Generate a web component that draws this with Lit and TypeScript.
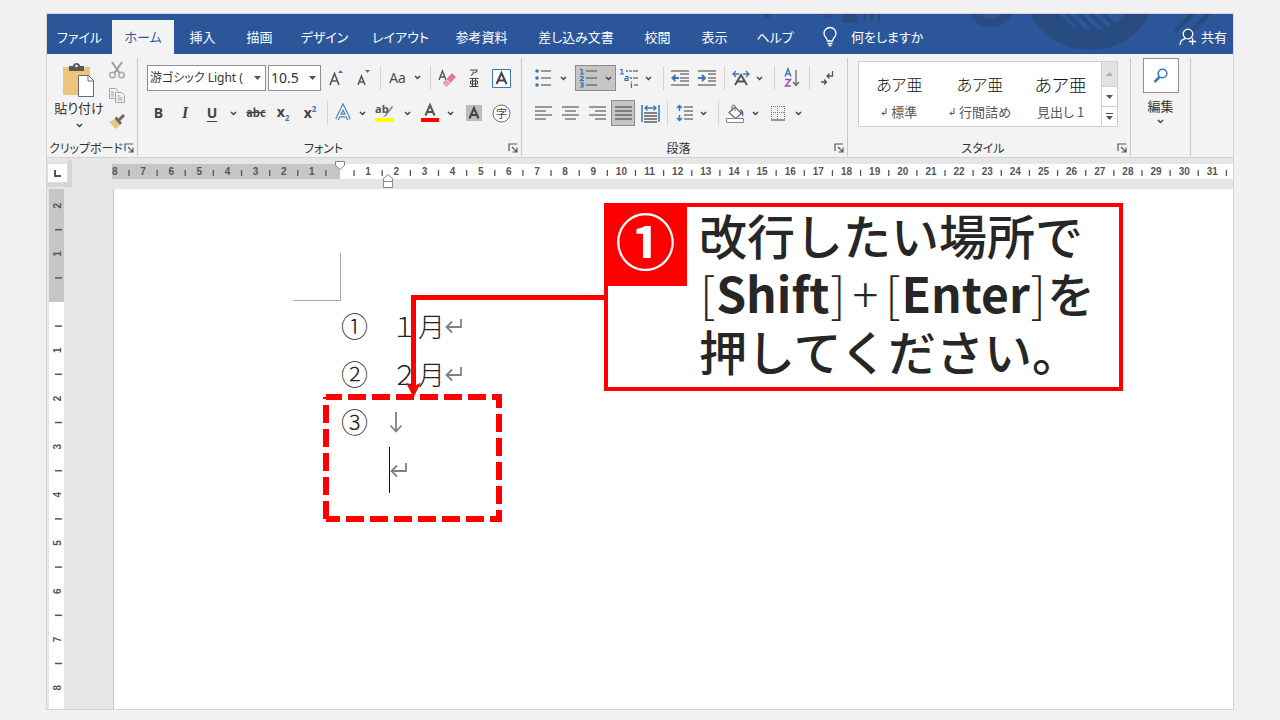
import { LitElement, html, svg, css } from "lit";
import { customElement, property, state } from "lit/decorators.js";
import { classMap } from "lit/directives/class-map.js";

const icon = (w: number, h: number, body: unknown) =>
  html`<svg width=${w} height=${h} viewBox="0 0 ${w} ${h}" fill="none" aria-hidden="true">${body}</svg>`;

const chevron = icon(7, 5, svg`<path d="M1 1l2.500 2.500L6 1" stroke="#444" stroke-width="1.500"/>`);
const caret = icon(7, 4, svg`<path d="M0 0h7L3.500 4z" fill="#555"/>`);
const launcherIcon = icon(10, 10, svg`<path d="M1 8V1h8M4 4l4.500 4.500M9 4.500V9H4.500" stroke="#555" stroke-width="1.200"/>`);

const lines = (rows: number[][], color = "#666") =>
  rows.map(([x1, x2, y]) => svg`<path d="M${x1} ${y}H${x2}" stroke=${color} stroke-width="1.300"/>`);

const icons = {
  paste: icon(34, 36, svg`
    <path d="M1 5h27v28H1z" fill="#edc47c"/>
    <path d="M7 9V4h4c0-4 7-4 7 0h4v5z" fill="#5a5a5a"/><circle cx="14.500" cy="4" r="1.300" fill="#f3f3f3"/>
    <path d="M16.500 13.500h10l5 5v16h-15z" fill="#fff" stroke="#6a6a6a"/><path d="M26 13.500v5.500h5.500" stroke="#6a6a6a"/>`),
  cut: icon(18, 18, svg`
    <path d="M4 1l7.500 11M14 1L6.500 12" stroke="#9b9b9b" stroke-width="2"/>
    <circle cx="4.500" cy="14" r="2.800" stroke="#aaa" stroke-width="1.500"/><circle cx="13.500" cy="14" r="2.800" stroke="#aaa" stroke-width="1.500"/>`),
  copy: icon(18, 17, svg`
    <path d="M1.500 1.500h6l3 3v7h-9z" fill="#f3f3f3" stroke="#a5a5a5"/>
    <path d="M7.500 5.500h6l3 3v7h-9z" fill="#f3f3f3" stroke="#a5a5a5"/>
    <path d="M3 5h3M3 7h3M3 9h3M9.500 9h3M9.500 11h5M9.500 13h5" stroke="#a5a5a5"/>`),
  brush: icon(18, 17, svg`
    <path d="M1 9l6-3 5 6-4 4z" fill="#edc47c"/><path d="M6.500 5.500l5.500 6.500 2-2-5.500-6.500z" fill="#6b6b6b"/>
    <path d="M11 7l5-5" stroke="#6b6b6b" stroke-width="3"/>`),
  grow: icon(16, 18, svg`<path d="M2 16L6.500 4.500 11 16M3.500 12h6" stroke="#555" stroke-width="1.600"/><path d="M10 4l2.500-3L15 4z" fill="#3a78b5"/>`),
  shrink: icon(14, 18, svg`<path d="M1 16l3.500-9L8 16M2.500 13h4" stroke="#555" stroke-width="1.500"/><path d="M8 1h5l-2.500 3z" fill="#3a78b5"/>`),
  eraser: icon(18, 19, svg`
    <path d="M1 11L4.500 2 8 11M2 8h5" stroke="#555" stroke-width="1.400"/>
    <path d="M8.500 10l5.500-6 4 4-5.500 6z" fill="#e8788c"/><path d="M8 10.500l4 4-3.500 3.500-4-4z" fill="#ee9aa8"/>`),
  ruby: icon(14, 20, svg`
    <path d="M3 2h7c0 2-1 2.500-2.500 3M6.500 3.500c0 2-.5 3-2.500 4" stroke="#444" stroke-width="1.200"/>
    <path d="M2.500 10.500h9M2.500 18.500h9M5.500 10.500v8M8.500 10.500v8M3.500 13v3M10.500 13v3M3.500 13h7M3.500 16h7" stroke="#444"/>`),
  boxA: icon(19, 19, svg`<path d="M.5.5h18v18H.5z" fill="#fff" stroke="#3a78b5"/><path d="M4.500 15L9.500 4l5 11M6 11.500h7" stroke="#444" stroke-width="2"/>`),
  glowA: icon(16, 18, svg`<path d="M2 15.500L8 3l6 12.500M4.500 11.500h7" stroke="#4a86c5" stroke-width="4"/><path d="M2 15.500L8 3l6 12.500M4.500 11.500h7" stroke="#fff" stroke-width="1.500"/>`),
  marker: icon(20, 20, svg`
    <text class="glyph" x="0" y="10" font-size="11" font-weight="700" fill="#555">ab</text>
    <path d="M17 3l-7 9-2 2 3-1 7-9z" fill="#777"/><path d="M0 15h19v4H0z" fill="#ff0"/>`),
  fontColor: icon(20, 20, svg`<path d="M5.500 12.500L10 2l4.500 10.500M7 9h6" stroke="#555" stroke-width="2"/><path d="M1 15h18v4H1z" fill="red"/>`),
  shadeA: icon(16, 16, svg`<path d="M0 0h16v16H0z" fill="#bdbdbd"/><path d="M3.500 13.500L8 3l4.500 10.500M5 10h6" stroke="#444" stroke-width="2"/>`),
  encircle: icon(19, 19, svg`<circle cx="9.500" cy="9.500" r="8.500" fill="#fff" stroke="#666"/><text class="jp" x="4" y="13.500" font-size="11" fill="#444">字</text>`),
  bullets: icon(16, 18, svg`${[2, 9, 16].map(y => svg`<circle cx="2" cy=${y} r="1.800" fill="#3a78b5"/>`)}${lines([[6, 16, 2], [6, 16, 9], [6, 16, 16]])}`),
  numbers: icon(17, 20, svg`
    <path d="M0 1.500h2V6M0 6h4M0 8.500h3V10L.5 12.500H4M0 15h3v4H0M1 17h2" stroke="#2f6fb0" stroke-width="1.200"/>
    ${lines([[6, 17, 3], [6, 17, 10], [6, 17, 17]])}`),
  multi: icon(19, 20, svg`
    <path d="M0 1.500h2V6M0 6h4M5 8.500h3v4H5v-2h3M11.500 13.500v1M10.500 16h1v4" stroke="#2f6fb0" stroke-width="1.200"/>
    ${lines([[6, 8, 3], [9, 12, 3], [13, 18, 3], [10, 12, 10], [13, 18, 10], [14, 18, 17]])}`),
  outdent: icon(18, 16, svg`${lines([[0, 18, 1], [9, 18, 4], [9, 18, 8], [9, 18, 11], [0, 18, 15]])}<path d="M8 8H2M4.500 5L1.500 8l3 3" stroke="#3a78b5" stroke-width="2"/>`),
  indent: icon(18, 16, svg`${lines([[0, 18, 1], [10, 18, 4], [10, 18, 8], [10, 18, 11], [0, 18, 15]])}<path d="M0 8h6M4 5l3 3-3 3" stroke="#3a78b5" stroke-width="2"/>`),
  scaleA: icon(18, 18, svg`
    <path d="M7 5H1M4 2L1 5l3 3M11 5h6M14 2l3 3-3 3" stroke="#3a78b5" stroke-width="1.300"/>
    <path d="M3 16l6-10 6 10M5 12.500h8" stroke="#555" stroke-width="2"/>`),
  sort: icon(16, 20, svg`
    <path d="M1 8.500L4 1l3 7.500M2 6h4" stroke="#3a78b5" stroke-width="1.400"/><path d="M1 11.500h5.500L1.500 18H7" stroke="#9a4fb5" stroke-width="1.500"/>
    <path d="M12 2v15M9 14l3 3.500 3-3.500" stroke="#666" stroke-width="1.300"/>`),
  marks: icon(13, 16, svg`<path d="M11.500 1v5H6M8.500 3.500L6 6l2.500 2.500" stroke="#555" stroke-width="1.300"/><path d="M0 12h5M3 9.500L5.500 12 3 14.500" stroke="#555" stroke-width="1.300"/>`),
  left: icon(17, 14, lines([[0, 17, 1], [0, 11, 5], [0, 17, 9], [0, 11, 13]])),
  center: icon(17, 14, lines([[0, 17, 1], [3, 14, 5], [0, 17, 9], [3, 14, 13]])),
  right: icon(17, 14, lines([[0, 17, 1], [6, 17, 5], [0, 17, 9], [6, 17, 13]])),
  justify: icon(17, 14, lines([[0, 17, 1], [0, 17, 5], [0, 17, 9], [0, 17, 13]], "#555")),
  distribute: icon(19, 19, svg`
    <path d="M1 1v17M18 1v17" stroke="#3a78b5" stroke-width="1.500"/><path d="M4 4h11M6.500 1.500L4 4l2.500 2.500M12.500 1.500L15 4l-2.500 2.500" stroke="#3a78b5" stroke-width="1.300"/>
    ${lines([[3, 16, 9], [3, 16, 12], [3, 16, 15], [3, 16, 18]], "#444")}`),
  spacing: icon(17, 18, svg`<path d="M3.500 1v6M1 4l2.500-2.500L6 4M3.500 11v6M1 14l2.500 2.500L6 14" stroke="#3a78b5" stroke-width="1.500"/>${lines([[8, 17, 3], [8, 17, 7], [8, 17, 11], [8, 17, 15]])}`),
  bucket: icon(19, 19, svg`
    <path d="M9 3l6.500 6.500-6 5L3 8.500z" fill="#fff" stroke="#666" stroke-width="1.200"/><path d="M6 7V2.500c0-2 3-2 3 0V7" stroke="#666"/>
    <path d="M14 5c4 1 4 5 2.500 8z" fill="#3a78b5"/><path d="M.5 14.500h17v4H.5z" fill="#fff" stroke="#888"/>`),
  borders: icon(16, 16, svg`<path d="M1.500 1v13M7.500 1v13M14.500 1v13M1 1.500h14M1 7.500h14" stroke="#777" stroke-dasharray="1 1"/><path d="M1 15h14" stroke="#777" stroke-width="1.500"/>`),
  search: icon(16, 16, svg`<circle cx="9.500" cy="5.500" r="4.300" stroke="#3a78b5" stroke-width="1.600"/><path d="M6.500 9L1.500 14" stroke="#3a78b5" stroke-width="2.500"/>`),
  bulb: icon(14, 20, svg`<path d="M4.500 14c0-3-3.500-4-3.500-7.500a6 6 0 0 1 12 0c0 3.500-3.500 4.500-3.500 7.500zM4.500 16.500h5M5.500 18.500h3" stroke="#fff" stroke-width="1.300"/>`),
  person: icon(18, 18, svg`<circle cx="9" cy="6" r="4.800" stroke="#fff" stroke-width="1.300"/><path d="M1 17c0-4 3-6 5.500-6.500M10 13.500h7M13.500 10v7" stroke="#fff" stroke-width="1.300"/>`),
  enter: icon(17, 16, svg`<path d="M16 1v8H2M7 3.500L1.500 9 7 14.500" stroke="#808080" stroke-width="1.800"/>`),
  lineBreak: icon(14, 22, svg`<path d="M7 1v19M1.500 14.500L7 20.500l5.500-6" stroke="#808080" stroke-width="1.800"/>`),
};

const base = css`
  *, *::before, *::after { box-sizing: border-box; }
  svg { display: block; flex: none; overflow: visible; }
  button, select { font: inherit; color: inherit; margin: 0; padding: 0; border: 0; background: none; border-radius: 0; }
  .glyph { font-family: "Open Sans", sans-serif; }
  .jp { font-family: "Noto Sans CJK JP", sans-serif; }
`;

@customElement("ribbon-tabs")
export class RibbonTabs extends LitElement {
  static styles = [base, css`
    :host { display: block; }
    .bar { position: relative; display: flex; align-items: flex-end; height: 40px; background: #2b579a; color: #fff; overflow: hidden; }
    .art { position: absolute; right: 0; top: 0; }
    .tabs { position: relative; display: grid; grid-template-columns: 65px 62px 57px 57px 73px 79px 83px 106px 57px 57px 64px; padding-right: 1px; }
    .tab { height: 34px; white-space: nowrap; display: flex; justify-content: center; align-items: center; }
    .active { background: #f3f3f3; color: #2b579a; }
    .tell, .share { position: relative; display: flex; align-items: center; height: 34px; }
    .tell { gap: 14px; padding-left: 15px; }
    .share { gap: 4px; margin-left: auto; padding-right: 6px; }
  `];
  @state() private active = "ホーム";
  private names = ["ファイル", "ホーム", "挿入", "描画", "デザイン", "レイアウト", "参考資料", "差し込み文書", "校閲", "表示", "ヘルプ"];

  render() {
    return html`<nav class="bar">
      <svg class="art" width="480" height="40" viewBox="0 0 480 40" fill="none" stroke="#284b80" aria-hidden="true">
        <path d="M12 0h5v4h-5zM67 0h11v5zM89 0h15v9H89z" fill="#284b80" stroke="none"/>
        <path d="M112 0v7M119 0v7M126 0v7" stroke-width="3"/>
        <circle cx="238" cy="-9" r="18" stroke-width="9"/>
        <circle cx="337" cy="-32" r="58" stroke-width="20"/>
        <path d="M303 0l25 24M314 0l22 23M326 0l20 20M338 0l17 17M350 0l14 14" stroke-width="4"/>
        <path d="M422 17L440 0M444 11L456 0M430 25L451 5" stroke-width="5"/>
      </svg>
      <div class="tabs" role="tablist">
        ${this.names.map(n => html`<button role="tab" class=${classMap({ tab: true, active: n === this.active })}
          aria-selected=${n === this.active} @click=${() => (this.active = n)}>${n}</button>`)}
      </div>
      <button class="tell">${icons.bulb}<span>何をしますか</span></button>
      <button class="share">${icons.person}<span>共有</span></button>
    </nav>`;
  }
}

@customElement("ribbon-panel")
export class RibbonPanel extends LitElement {
  static styles = [base, css`
    :host { display: block; }
    .ribbon { display: grid; grid-template-columns: 91px 384px 326px 283px 60px 1fr; padding: 4px 0 1px; background: #f3f3f3; border-bottom: 1px solid #d2d2d2; color: #333; }
    .group { display: flex; flex-direction: column; border-right: 1px solid #c8c8c8; }
    .body { height: 82px; }
    .caption { display: grid; grid-template-columns: 1fr auto; align-items: center; height: 16px; padding: 0 3px 0 1px; text-align: center; font-size: 12px; line-height: 16px; white-space: nowrap; }
    .rows { display: flex; flex-direction: column; gap: 9px; padding-top: 7px; }
    .font { padding-left: 9px; }
    .para { padding-left: 11px; }
    .row { display: grid; height: 26px; place-items: center; }
    .font1 { grid-template-columns: 121px 54px 28px 28px 4px 46px 4px 30px 23px 32px; justify-content: start; }
    .font2 { grid-template-columns: 23px 30px 24px 19px 26px 28px 26px 8px 24px 14px 31px 15px 29px 13px 34px 20px; justify-content: start; }
    .para1 { grid-template-columns: 20px 20px 45px 23px 14px 16px 18px 35px 1px 31px 7px 22px 14px 20px 16px; justify-content: start; }
    .para2 { grid-template-columns: 20px 34px 20px 32px 22px 12px 22px 16px 14px 20px 20px 26px 14px; justify-content: start; }
    .sep { width: 1px; height: 24px; background: #d4d4d4; }
    .tool { display: flex; align-items: center; justify-content: center; gap: 8px; color: #444; white-space: nowrap; }
    .pressed { background: #c5c5c5; border: 1px solid #8c8c8c; height: 26px; }
    .list { width: 41px; }
    .align { width: 24px; }
    .combo { display: grid; grid-template-columns: 1fr 16px; align-items: center; justify-self: start; height: 26px; background: #fff; border: 1px solid #8f8f8f; font-size: 12px; font-family: "Noto Sans", "Noto Sans CJK JP", sans-serif; }
    .combo select { appearance: none; width: 100%; height: 24px; padding: 0 14px 0 2px; outline: 0; grid-area: 1 / 1 / 2 / 3; }
    .combo svg { grid-area: 1 / 2; pointer-events: none; justify-self: center; }
    .family { width: 119px; }
    .size { width: 53px; font-size: 14px; }
    .letter { font-family: "Open Sans", sans-serif; font-weight: 700; font-size: 14px; }
    .italic { font-family: "Liberation Serif", serif; font-style: italic; font-size: 16px; }
    .under { text-decoration: underline; text-underline-offset: 3px; }
    .strike { font-size: 11px; font-weight: 600; text-decoration: line-through; }
    .case { font-size: 14px; font-family: "Open Sans", sans-serif; }
    sub, sup { color: #3a78b5; font-size: 8px; line-height: 1; }
    .clip { display: grid; grid-template-columns: 56px 20px; padding-left: 4px; }
    .paste { display: flex; flex-direction: column; align-items: center; padding-top: 4px; white-space: nowrap; line-height: 20px; }
    .paste svg:last-child { margin-top: 5px; }
    .side { display: grid; grid-template-rows: 24px 27px 24px; place-items: center; }
    .styles { padding: 3px 12px 0 10px; }
    .gallery { display: grid; grid-template-columns: 1fr 1fr 1fr 16px; height: 66px; background: #fff; border: 1px solid #cfcfcf; }
    .style { display: flex; flex-direction: column; align-items: center; white-space: nowrap; color: #555; }
    .sample { height: 40px; line-height: 44px; font-size: 16px; font-weight: 300; color: #111; }
    .large { font-size: 18px; }
    .name { display: flex; align-items: center; gap: 4px; line-height: 20px; }
    .scroll { display: grid; grid-template-rows: 24px 20px 20px; border-left: 1px solid #cfcfcf; }
    .scroll button { display: grid; place-content: center; justify-items: center; gap: 2px; }
    .scroll button + button { border-top: 1px solid #cfcfcf; }
    .off { background: #e2e2e2; }
    .bar { width: 7px; height: 1px; background: #555; }
    .edit { display: flex; flex-direction: column; align-items: center; width: 100%; line-height: 26px; }
    .frame { display: grid; place-items: center; width: 36px; height: 35px; border: 1px solid #8f8f8f; background: #fff; }
  `];

  private tool(label: string, content: unknown, cls = "") {
    return html`<button class="tool ${cls}" aria-label=${label} title=${label}>${content}</button>`;
  }
  private more(label: string) { return this.tool(label + "のオプション", chevron); }
  private caption(text: string) {
    return html`<div class="caption"><span>${text}</span><button aria-label="${text}の詳細">${launcherIcon}</button></div>`;
  }

  render() {
    const sep = html`<span class="sep"></span>`;
    const ret = icon(6, 8, svg`<path d="M5 0v5.500H1M3 3.500L1 5.500l2 2" stroke="#555"/>`);
    const t = this.tool.bind(this);
    const m = this.more.bind(this);
    return html`<div class="ribbon">
      <section class="group">
        <div class="body clip">
          <button class="paste">${icons.paste}<span>貼り付け</span>${chevron}</button>
          <div class="side">${t("切り取り", icons.cut)}${t("コピー", icons.copy)}${t("書式のコピー", icons.brush)}</div>
        </div>
        ${this.caption("クリップボード")}
      </section>
      <section class="group">
        <div class="body rows font">
          <div class="row font1">
            <label class="combo family"><select aria-label="フォント名"><option>游ゴシック Light (</option></select>${caret}</label>
            <label class="combo size"><select aria-label="フォント サイズ"><option>10.5</option></select>${caret}</label>
            ${t("フォント サイズの拡大", icons.grow)}${t("フォント サイズの縮小", icons.shrink)}${sep}
            ${t("文字種の変換", html`<span class="case">Aa</span>${chevron}`)}${sep}
            ${t("書式のクリア", icons.eraser)}${t("ルビ", icons.ruby)}${t("囲み線", icons.boxA)}
          </div>
          <div class="row font2">
            ${t("太字", "B", "letter")}${t("斜体", "I", "letter italic")}${t("下線", html`<span class="under">U</span>`, "letter")}${m("下線")}
            ${t("取り消し線", html`<span class="strike">abc</span>`)}
            ${t("下付き", html`<span>x<sub>2</sub></span>`, "letter")}${t("上付き", html`<span>x<sup>2</sup></span>`, "letter")}${sep}
            ${t("文字の効果", icons.glowA)}${m("文字の効果")}${t("蛍光ペン", icons.marker)}${m("蛍光ペン")}
            ${t("フォントの色", icons.fontColor)}${m("フォントの色")}${t("文字の網かけ", icons.shadeA)}${t("囲い文字", icons.encircle)}
          </div>
        </div>
        ${this.caption("フォント")}
      </section>
      <section class="group">
        <div class="body rows para">
          <div class="row para1">
            ${t("箇条書き", icons.bullets)}${m("箇条書き")}
            ${t("段落番号", html`${icons.numbers}${chevron}`, "pressed list")}
            ${t("アウトライン", icons.multi)}${m("アウトライン")}${sep}
            ${t("インデントを減らす", icons.outdent)}${t("インデントを増やす", icons.indent)}${sep}
            ${t("拡張書式", icons.scaleA)}${m("拡張書式")}${sep}${t("並べ替え", icons.sort)}${sep}${t("編集記号", icons.marks)}
          </div>
          <div class="row para2">
            ${t("左揃え", icons.left)}${t("中央揃え", icons.center)}${t("右揃え", icons.right)}${t("両端揃え", icons.justify, "pressed align")}
            ${t("均等割り付け", icons.distribute)}${sep}${t("行間", icons.spacing)}${m("行間")}${sep}
            ${t("塗りつぶし", icons.bucket)}${m("塗りつぶし")}${t("罫線", icons.borders)}${m("罫線")}
          </div>
        </div>
        ${this.caption("段落")}
      </section>
      <section class="group">
        <div class="body styles">
          <div class="gallery">
            <button class="style"><span class="sample">あア亜</span><span class="name">${ret}標準</span></button>
            <button class="style"><span class="sample">あア亜</span><span class="name">${ret}行間詰め</span></button>
            <button class="style"><span class="sample large">あア亜</span><span class="name">見出し 1</span></button>
            <div class="scroll">
              <button class="off" aria-label="上へ">${icon(7, 4, svg`<path d="M0 4h7L3.500 0z" fill="#b0b0b0"/>`)}</button>
              <button aria-label="下へ">${caret}</button>
              <button aria-label="その他"><span class="bar"></span>${caret}</button>
            </div>
          </div>
        </div>
        ${this.caption("スタイル")}
      </section>
      <section class="group">
        <button class="edit"><span class="frame">${icons.search}</span><span>編集</span>${chevron}</button>
      </section>
    </div>`;
  }
}

@customElement("doc-ruler")
export class DocRuler extends LitElement {
  static styles = [base, css`
    :host { display: block; overflow: hidden; }
    text { font: 700 10px "Liberation Sans", sans-serif; fill: #555; text-anchor: middle; }
  `];
  @property({ type: Boolean }) vertical = false;
  @property({ type: Number }) origin = 0;
  @property({ type: Number }) pitch = 28;
  @property({ type: Number }) before = 0;
  @property({ type: Number }) after = 0;

  render() {
    const marks = Array.from({ length: this.before + this.after + 1 }, (_, i) => i - this.before);
    const at = (n: number) => this.origin + n * this.pitch;
    if (this.vertical) {
      return html`<svg width="15" height="100%">
        <rect width="15" height="100%" fill="#fff"/><rect width="15" height=${this.origin} fill="#c6c6c6"/>
        ${marks.map(n => svg`
          ${n ? svg`<text transform="translate(12 ${at(n)}) rotate(-90)">${Math.abs(n)}</text>` : ""}
          <path d="M6 ${at(n + 0.5)}h7" stroke="#555" stroke-width="1.500"/>`)}
      </svg>`;
    }
    return html`<svg width="100%" height="15">
      <rect width="100%" height="15" fill="#fff"/><rect width=${this.origin} height="15" fill="#c6c6c6"/>
      ${marks.map(n => svg`
        ${n ? svg`<text x=${at(n)} y="11">${Math.abs(n)}</text>` : ""}
        <path d="M${at(n + 0.5)} 6v6" stroke="#555" stroke-width="1.300"/>`)}
    </svg>`;
  }
}

@customElement("app-root")
export class AppRoot extends LitElement {
  static styles = [base, css`
    :host { display: block; height: 100vh; padding: 13px 46px 10px; box-sizing: border-box; overflow: hidden; background: #f1f1f1; font: 13px/1.2 "Noto Sans CJK JP", sans-serif; font-feature-settings: "palt"; }
    .window { display: grid; grid-template-rows: auto auto 31px 1fr; height: 100%; border: 1px solid #d4d4d4; background: #e6e6e6; }
    .rulerbar { position: relative; display: grid; grid-template-columns: 65px 1fr; }
    .corner { width: 25px; height: 27px; border: solid #d6d6d6; border-width: 0 4px 4px 0; margin-top: 2px; padding-top: 3px; }
    .stop { display: grid; place-items: center; width: 21px; height: 20px; background: #fff; border: 1px solid #ddd; }
    .across { padding-top: 6px; }
    .indents { position: absolute; left: 287px; top: 2px; }
    .work { display: grid; grid-template-columns: 2px 15px 49px 1fr; min-height: 0; }
    .down { grid-column: 2; }
    .paper { position: relative; grid-column: 4; min-height: 0; padding: 64px 179px 0; border-left: 1px solid #c6c6c6; background: #fff; overflow: hidden; color: #222; }
    .margin { width: 48px; height: 48px; border: solid #a8a8a8; border-width: 0 1px 1px 0; }
    .lines { margin: 1px 0 0 48px; padding: 0; list-style: none; font-size: 27px; font-weight: 300; line-height: 48px; font-feature-settings: normal; }
    .line { display: grid; grid-template-columns: 48px auto auto; justify-content: start; align-items: center; height: 48px; }
    .month { padding-left: 2px; }
    .caretline { display: flex; align-items: center; height: 48px; padding-left: 48px; }
    .cursor { width: 1px; height: 46px; background: #111; }
    .notes { position: absolute; left: -1px; top: 0; }
    .callout { position: absolute; left: 490px; top: 14px; display: grid; grid-template-columns: 91px auto; align-items: start; width: 519px; height: 188px; border: 4px solid #f00; background: #fff; color: #262626; }
    .badge { display: grid; place-items: center; width: 83px; height: 83px; margin: -4px 0 0 -4px; background: #f00; color: #fff; font-size: 60px; font-weight: 700; line-height: 70px; padding-bottom: 12px; font-feature-settings: normal; }
    .message { margin: -2px 0 0; font-size: 48px; font-weight: 500; line-height: 58px; white-space: nowrap; font-feature-settings: normal; }
    .keys { font-weight: 700; }
    .thin { font-weight: 300; margin: 0 1px; }
    .plus { font-weight: 300; margin: 0 6px; }
  `];

  render() {
    return html`<main class="window">
      <ribbon-tabs></ribbon-tabs>
      <ribbon-panel></ribbon-panel>
      <div class="rulerbar">
        <div class="corner"><div class="stop">${icon(7, 7, svg`<path d="M1 0v6h6" stroke="#555" stroke-width="2"/>`)}</div></div>
        <doc-ruler class="across" .origin=${228} .pitch=${28.14} .before=${8} .after=${31}></doc-ruler>
        <svg class="indents" width="62" height="29" fill="#fff" stroke="#888" aria-hidden="true">
          <path d="M1.500 1.500h9v4l-4.500 4-4.500-4zM49.500 21.500v-3l4.500-4 4.500 4v3zM49.500 21.500h9v6h-9z"/>
        </svg>
      </div>
      <div class="work">
        <doc-ruler class="down" vertical .origin=${113} .pitch=${48.2} .before=${2} .after=${8}></doc-ruler>
        <article class="paper">
          <div class="margin"></div>
          <ul class="lines">
            <li class="line"><span>①</span><span class="month">１月</span>${icons.enter}</li>
            <li class="line"><span>②</span><span class="month">２月</span>${icons.enter}</li>
            <li class="line"><span>③</span>${icons.lineBreak}</li>
            <li class="caretline"><span class="cursor"></span>${icons.enter}</li>
          </ul>
          <svg class="notes" width="620" height="420" fill="none" stroke="#f00" aria-hidden="true">
            <g transform="translate(-113 -189)">
              <g stroke-width="6" stroke-dasharray="18 6"><path d="M326 397H499V519H326" stroke-dashoffset="2"/><path d="M326 519V397"/></g>
              <path d="M605 297.500H413.500V388" stroke-width="5"/>
              <path d="M406 382.500l7.500 4 7.500-4-7.500 15z" fill="#f00" stroke="none"/>
            </g>
          </svg>
          <aside class="callout">
            <div class="badge">①</div>
            <p class="message">改行したい場所で<br><span class="thin">[</span><span class="keys">Shift</span><span class="thin">]</span><span class="plus">+</span><span class="thin">[</span><span class="keys">Enter</span><span class="thin">]</span>を<br>押してください。</p>
          </aside>
        </article>
      </div>
    </main>`;
  }
}
